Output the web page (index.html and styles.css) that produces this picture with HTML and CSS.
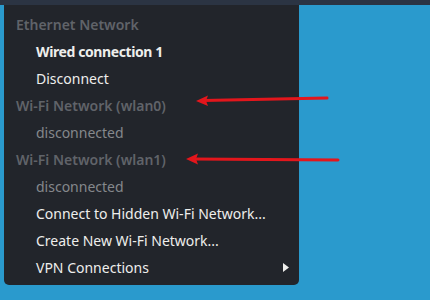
FILE: index.html
```html
<!DOCTYPE html>
<html>
<head>
<meta charset="utf-8">
<link rel="stylesheet" href="styles.css">
</head>
<body>
<div class="topbar"></div>
<div class="desktop">
  <div class="menu">
    <div class="row header">Ethernet Network</div>
    <div class="row item bold">Wired connection 1</div>
    <div class="row item">Disconnect</div>
    <div class="row header">Wi-Fi Network (wlan0)</div>
    <div class="row item dim">disconnected</div>
    <div class="row header">Wi-Fi Network (wlan1)</div>
    <div class="row item dim">disconnected</div>
    <div class="row item">Connect to Hidden Wi-Fi Network...</div>
    <div class="row item">Create New Wi-Fi Network...</div>
    <div class="row item sub"><span>VPN Connections</span><svg class="tri" width="6" height="9" viewBox="0 0 6 9"><path d="M0 0 L6 4.5 L0 9 Z" fill="#eeeeec"/></svg></div>
  </div>
</div>
<svg class="arrows" width="430" height="300" viewBox="0 0 430 300">
  <g stroke="#e3161c" stroke-width="3" stroke-linecap="round" fill="none">
    <line x1="203" y1="100.5" x2="327" y2="98"/>
    <line x1="193" y1="159" x2="338" y2="160"/>
  </g>
  <g fill="#e3161c">
    <path d="M196 101 L208 95.5 L206 100.7 L208 106 Z"/>
    <path d="M186 159 L198 153.5 L196 159 L198 164.5 Z"/>
  </g>
</svg>
</body>
</html>
```
FILE: styles.css
```css
html, body {
  margin: 0;
  padding: 0;
}
body {
  width: 430px;
  height: 300px;
  background: #2a9acd;
  overflow: hidden;
  position: relative;
  font-family: "Noto Sans", "DejaVu Sans", sans-serif;
}
.topbar {
  height: 5px;
  background: #2b3443;
}
.desktop {
  padding-left: 4px;
}
.menu {
  width: 295px;
  height: 280px;
  box-sizing: border-box;
  background: #22252b;
  border-radius: 0 0 5px 5px;
  padding-top: 6px;
  display: flex;
  flex-direction: column;
}
.row {
  height: 27px;
  line-height: 27px;
  font-size: 14px;
  color: #eeeeec;
  white-space: nowrap;
  flex-shrink: 0;
}
.header {
  padding-left: 12px;
  color: #606369;
  font-weight: 600;
}
.item {
  padding-left: 32px;
}
.bold {
  font-weight: 700;
  letter-spacing: -0.4px;
}
.dim {
  color: #85888c;
}
.sub {
  display: flex;
  align-items: center;
  justify-content: space-between;
  padding-right: 10px;
}
.tri {
  display: block;
}
.arrows {
  position: absolute;
  left: 0;
  top: 0;
}
```
